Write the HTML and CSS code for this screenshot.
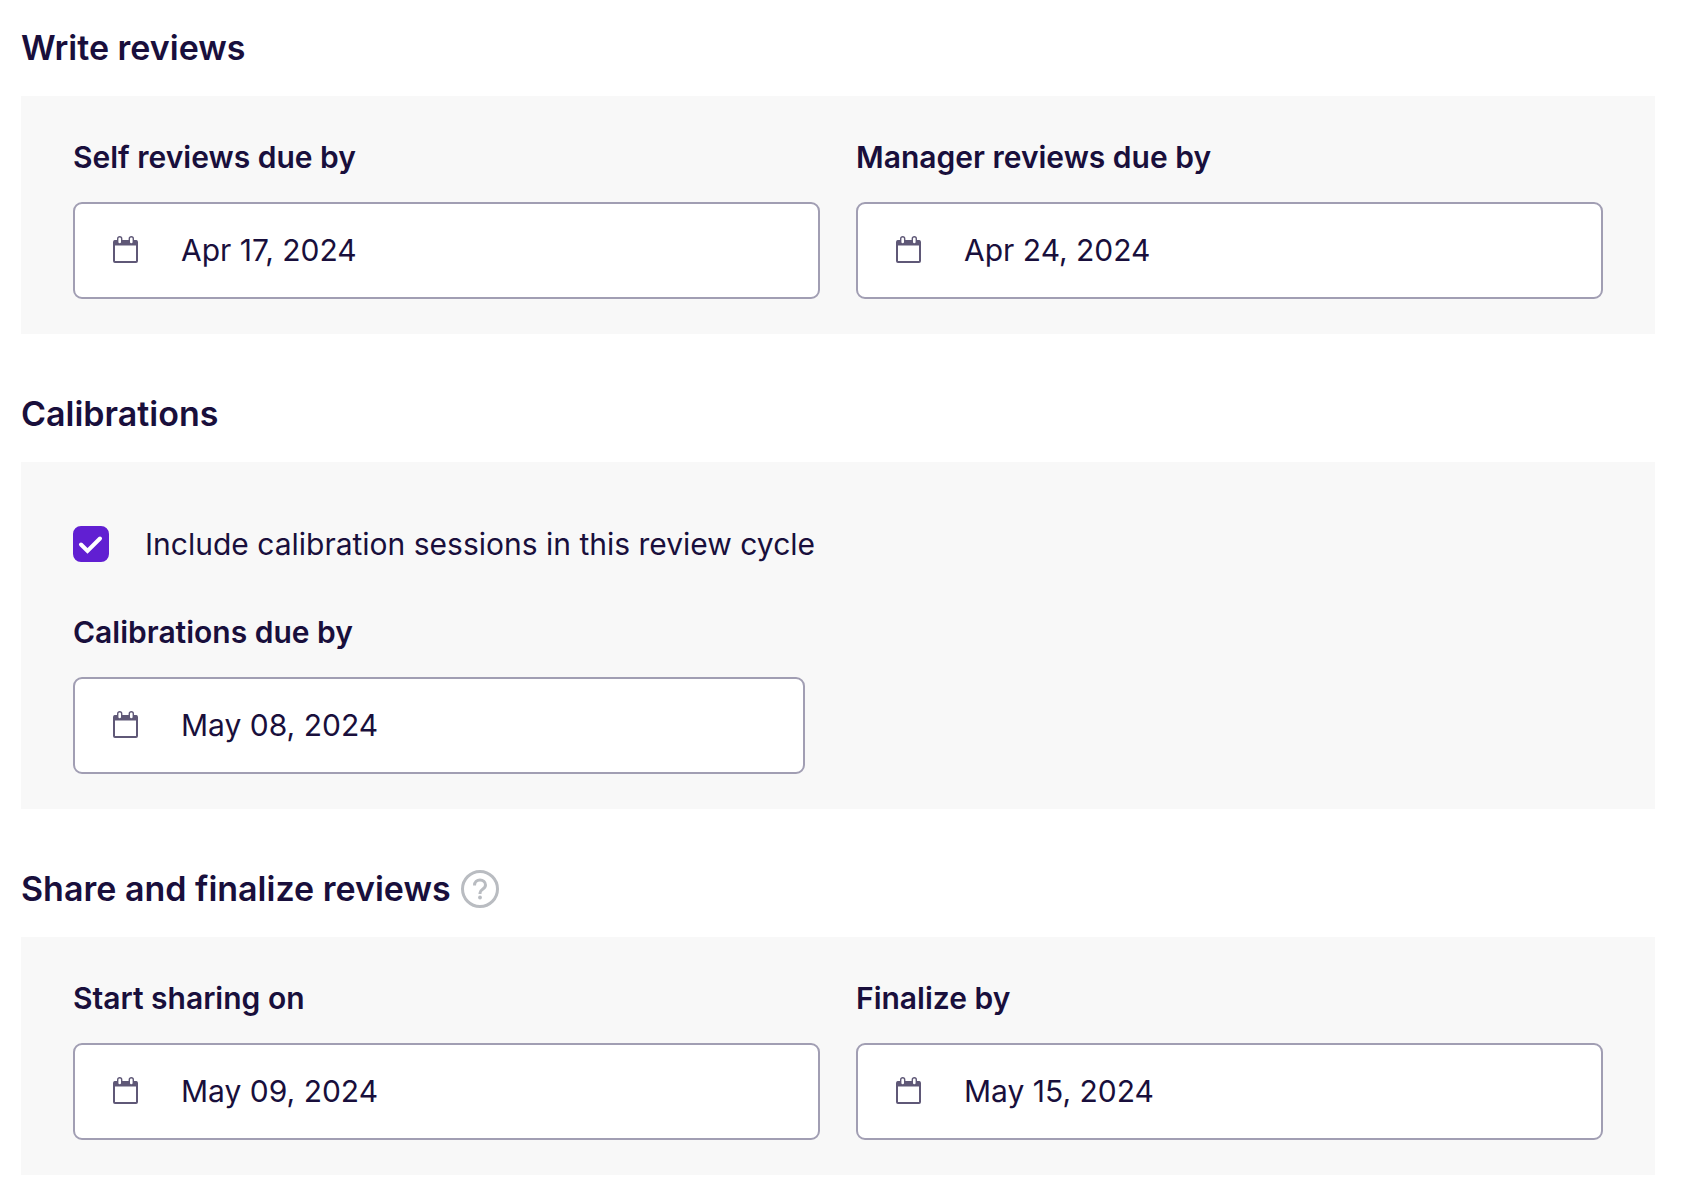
FILE: index.html
```html
<!DOCTYPE html>
<html lang="en">
<head>
  <meta charset="UTF-8" />
  <meta name="viewport" content="width=device-width, initial-scale=1.0"/>
  <title>Review cycle timeline</title>
  <link rel="stylesheet" href="styles.css">
</head>
<body>
  <svg class="sprite" aria-hidden="true">
    <symbol id="calendar" viewBox="0 0 25 27">
      <rect x="1" y="5" width="23" height="21" rx="1" fill="none" stroke="currentColor" stroke-width="2"/>
      <path d="M1 4.5h23v5H1z" fill="currentColor"/>
      <rect x="4.7" y="0.7" width="4" height="7.300" rx="2" fill="#fff" stroke="currentColor" stroke-width="1.4"/>
      <rect x="16.300" y="0.7" width="4" height="7.300" rx="2" fill="#fff" stroke="currentColor" stroke-width="1.4"/>
    </symbol>
  </svg>
  <form class="timeline">
    <section>
      <h2>Write reviews</h2>
      <div class="panel columns">
        <div class="field">
          <label for="self-due">Self reviews due by</label>
          <div class="date-box">
            <svg class="calendar"><use href="#calendar"/></svg>
            <input type="text" id="self-due" value="Apr 17, 2024">
          </div>
        </div>
        <div class="field">
          <label for="manager-due">Manager reviews due by</label>
          <div class="date-box">
            <svg class="calendar"><use href="#calendar"/></svg>
            <input type="text" id="manager-due" value="Apr 24, 2024">
          </div>
        </div>
      </div>
    </section>
    <section>
      <h2>Calibrations</h2>
      <div class="panel">
        <div class="check-row">
          <span class="check">
            <input type="checkbox" id="include-calibration" checked>
            <svg viewBox="0 0 36 36"><path d="M8 18.5l6.500 6.500L27 12.500" fill="none" stroke="#fff" stroke-width="4" stroke-linecap="round"/></svg>
          </span>
          <label for="include-calibration">Include calibration sessions in this review cycle</label>
        </div>
        <div class="field half">
          <label for="calibration-due">Calibrations due by</label>
          <div class="date-box">
            <svg class="calendar"><use href="#calendar"/></svg>
            <input type="text" id="calibration-due" value="May 08, 2024">
          </div>
        </div>
      </div>
    </section>
    <section>
      <div class="heading-row">
        <h2>Share and finalize reviews</h2>
        <button type="button" class="help" aria-label="Help">
          <svg viewBox="0 0 40 40" fill="none" stroke="currentColor" stroke-width="3">
            <circle cx="20" cy="20" r="17.5"/>
            <path d="M14.5 16.500c0-3.500 2.500-5.500 5.500-5.500s5.500 2 5.500 5c0 4.500-5.500 4-5.500 8v1"/>
            <circle cx="20" cy="28.500" r="1.900" fill="currentColor" stroke="none"/>
          </svg>
        </button>
      </div>
      <div class="panel columns">
        <div class="field">
          <label for="share-on">Start sharing on</label>
          <div class="date-box">
            <svg class="calendar"><use href="#calendar"/></svg>
            <input type="text" id="share-on" value="May 09, 2024">
          </div>
        </div>
        <div class="field">
          <label for="finalize-by">Finalize by</label>
          <div class="date-box">
            <svg class="calendar"><use href="#calendar"/></svg>
            <input type="text" id="finalize-by" value="May 15, 2024">
          </div>
        </div>
      </div>
    </section>
  </form>
</body>
</html>
```
FILE: styles.css
```css
* {
  box-sizing: border-box;
  margin: 0;
  padding: 0;
}
body {
  font-family: Inter, 'Liberation Sans', sans-serif;
  font-size: 30px;
  line-height: 40px;
  color: #190f3c;
  background: #fff;
}
.sprite {
  display: none;
}
.timeline {
  display: flex;
  flex-direction: column;
  gap: 60px;
  padding: 28px 29px 28px 21px;
}
h2 {
  font-size: 34px;
  font-weight: 600;
  line-height: 40px;
}
.heading-row {
  display: flex;
  align-items: center;
  gap: 9px;
}
.help {
  width: 40px;
  height: 40px;
  border: none;
  background: none;
  color: #b9bcc1;
  cursor: pointer;
}
.help svg {
  display: block;
}
.panel {
  margin-top: 28px;
  padding: 41px 52px 35px;
  background: #f8f8f8;
}
.columns {
  display: grid;
  grid-template-columns: 1fr 1fr;
  gap: 36px;
}
.field label {
  display: block;
  margin-bottom: 25px;
  font-weight: 600;
}
.half {
  width: calc(50% - 33px);
}
.date-box {
  display: flex;
  align-items: center;
  gap: 43px;
  height: 97px;
  padding: 0 38px 2px;
  border: 2px solid #a19eb3;
  border-radius: 9px;
  background: #fff;
}
.calendar {
  flex: none;
  width: 25px;
  height: 27px;
  color: #5f5877;
}
.date-box input {
  flex: 1;
  min-width: 0;
  border: none;
  outline: none;
  background: none;
  font: inherit;
  color: inherit;
}
.check-row {
  display: flex;
  align-items: center;
  gap: 36px;
  margin: 21px 0 48px;
}
.check {
  position: relative;
  width: 36px;
  height: 36px;
}
.check input {
  display: block;
  width: 36px;
  height: 36px;
  appearance: none;
  border: 2px solid #a19eb3;
  border-radius: 8px;
  background: #fff;
}
.check input:checked {
  border-color: #611fd2;
  background: #611fd2;
}
.check svg {
  position: absolute;
  inset: 0;
  pointer-events: none;
}
```
